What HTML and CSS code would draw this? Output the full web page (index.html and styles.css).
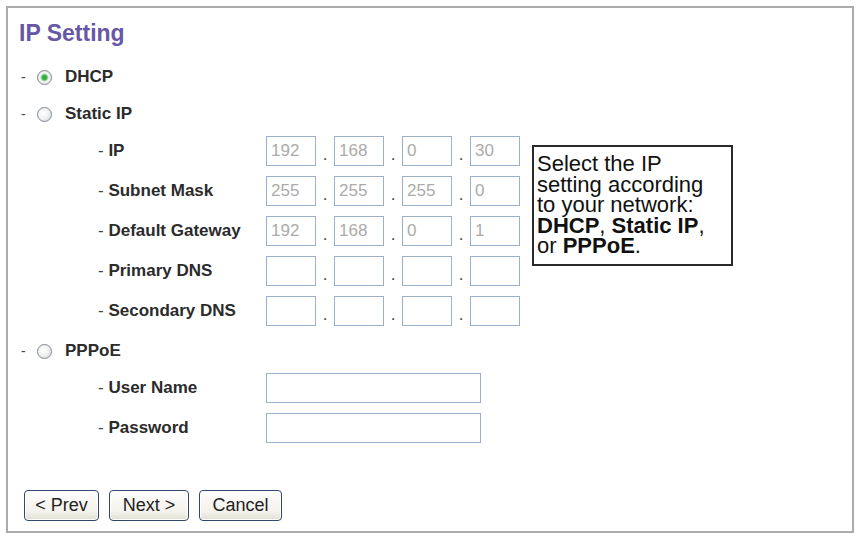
FILE: index.html
```html
<!DOCTYPE html>
<html>
<head>
<meta charset="utf-8">
<title>IP Setting</title>
<link rel="stylesheet" href="styles.css">
</head>
<body>
<div class="frame">
  <h1 class="title">IP Setting</h1>

  <div class="opt opt-first"><span class="dash">-</span><span class="radio checked"></span><span class="opt-label">DHCP</span></div>
  <div class="opt"><span class="dash">-</span><span class="radio"></span><span class="opt-label">Static IP</span></div>

  <div class="static">
    <div class="fields">
      <div class="field">
        <span class="label"><span class="ldash">-</span> IP</span>
        <div class="ip"><span class="oct">192</span><span class="dot">.</span><span class="oct">168</span><span class="dot">.</span><span class="oct">0</span><span class="dot">.</span><span class="oct">30</span></div>
      </div>
      <div class="field">
        <span class="label"><span class="ldash">-</span> Subnet Mask</span>
        <div class="ip"><span class="oct">255</span><span class="dot">.</span><span class="oct">255</span><span class="dot">.</span><span class="oct">255</span><span class="dot">.</span><span class="oct">0</span></div>
      </div>
      <div class="field">
        <span class="label"><span class="ldash">-</span> Default Gateway</span>
        <div class="ip"><span class="oct">192</span><span class="dot">.</span><span class="oct">168</span><span class="dot">.</span><span class="oct">0</span><span class="dot">.</span><span class="oct">1</span></div>
      </div>
      <div class="field">
        <span class="label"><span class="ldash">-</span> Primary DNS</span>
        <div class="ip"><span class="oct"></span><span class="dot">.</span><span class="oct"></span><span class="dot">.</span><span class="oct"></span><span class="dot">.</span><span class="oct"></span></div>
      </div>
      <div class="field">
        <span class="label"><span class="ldash">-</span> Secondary DNS</span>
        <div class="ip"><span class="oct"></span><span class="dot">.</span><span class="oct"></span><span class="dot">.</span><span class="oct"></span><span class="dot">.</span><span class="oct"></span></div>
      </div>
    </div>
    <div class="note">Select the IP<br>setting according<br>to your network:<br><b>DHCP</b>, <b>Static IP</b>,<br>or <b>PPPoE</b>.</div>
  </div>

  <div class="opt opt-pppoe"><span class="dash">-</span><span class="radio"></span><span class="opt-label">PPPoE</span></div>

  <div class="fields pfields">
    <div class="field">
      <span class="label"><span class="ldash">-</span> User Name</span>
      <span class="text-box"></span>
    </div>
    <div class="field">
      <span class="label"><span class="ldash">-</span> Password</span>
      <span class="text-box"></span>
    </div>
  </div>

  <div class="buttons">
    <button class="btn btn-prev">&lt; Prev</button>
    <button class="btn btn-next">Next &gt;</button>
    <button class="btn btn-cancel">Cancel</button>
  </div>
</div>
</body>
</html>
```

FILE: styles.css
```css
html, body {
  margin: 0;
  padding: 0;
  background: #ffffff;
}

body {
  font-family: "Liberation Sans", Arial, sans-serif;
  color: #2e2e2e;
}

.frame {
  box-sizing: border-box;
  width: 848px;
  height: 527px;
  margin: 6px 0 0 6px;
  border: 2px solid #acacac;
  padding: 10px 0 0 11px;
  display: flex;
  flex-direction: column;
  align-items: flex-start;
}

.title {
  margin: 0;
  font-size: 23px;
  line-height: 30px;
  font-weight: bold;
  color: #6757a6;
}

.opt {
  display: flex;
  align-items: center;
  height: 30px;
  margin-top: 7px;
}

.opt-first {
  margin-top: 14px;
}

.opt-pppoe {
  margin-top: 10px;
}

.dash {
  font-size: 14px;
  color: #444;
  width: 5px;
  margin-left: 2px;
}

.radio {
  box-sizing: border-box;
  width: 15px;
  height: 15px;
  margin: 0 13px 0 11px;
  border: 1px solid #7e8893;
  border-radius: 50%;
  background: radial-gradient(circle at 40% 40%, #ffffff 0, #f2f2f2 45%, #d0d3d8 100%);
}

.radio.checked {
  background: radial-gradient(circle at 50% 50%, #2ea83b 0, #3cb84a 2.4px, #a8dcab 3.4px, #f4f4f4 4.4px, #d6d9dc 100%);
}

.opt-label {
  font-size: 17px;
  font-weight: bold;
  color: #2b2b2b;
}

.static {
  display: flex;
  align-items: flex-start;
  margin-top: 7px;
}

.fields {
  display: flex;
  flex-direction: column;
  gap: 10px;
  padding-left: 79px;
}

.pfields {
  margin-top: 7px;
}

.field {
  display: flex;
  align-items: center;
  height: 30px;
}

.label {
  width: 168px;
  flex-shrink: 0;
  font-size: 17px;
  font-weight: bold;
  color: #2b2b2b;
  white-space: nowrap;
}

.ldash {
  font-weight: normal;
  color: #444;
}

.ip {
  display: flex;
  align-items: stretch;
  height: 30px;
}

.oct {
  box-sizing: border-box;
  width: 50px;
  height: 30px;
  border: 1px solid #9db0ca;
  padding-left: 4px;
  font-size: 17px;
  line-height: 28px;
  color: #ababab;
}

.dot {
  width: 18px;
  align-self: flex-end;
  text-align: center;
  font-size: 17px;
  line-height: 17px;
  margin-bottom: 3px;
  color: #444;
}

.text-box {
  box-sizing: border-box;
  width: 215px;
  height: 30px;
  border: 1px solid #9db0ca;
}

.note {
  box-sizing: border-box;
  width: 201px;
  margin: 9px 0 0 12px;
  padding: 7px 4px 7px 3px;
  border: 2px solid #2a2a2a;
  font-size: 22px;
  line-height: 20.5px;
  color: #111;
}

.note b {
  font-weight: bold;
}

.buttons {
  display: flex;
  gap: 10px;
  margin-top: 47px;
  padding-left: 5px;
}

.btn {
  box-sizing: border-box;
  height: 31px;
  padding: 0;
  border: 1px solid #34466a;
  border-radius: 4px;
  background: linear-gradient(#fdfdfb 0%, #f4f2ec 70%, #e2dfd4 100%);
  box-shadow: inset 0 0 0 1px #ffffff;
  font-family: "Liberation Sans", Arial, sans-serif;
  font-size: 18px;
  color: #222;
  text-align: center;
}

.btn-prev {
  width: 75px;
}

.btn-next {
  width: 80px;
}

.btn-cancel {
  width: 83px;
}
```
